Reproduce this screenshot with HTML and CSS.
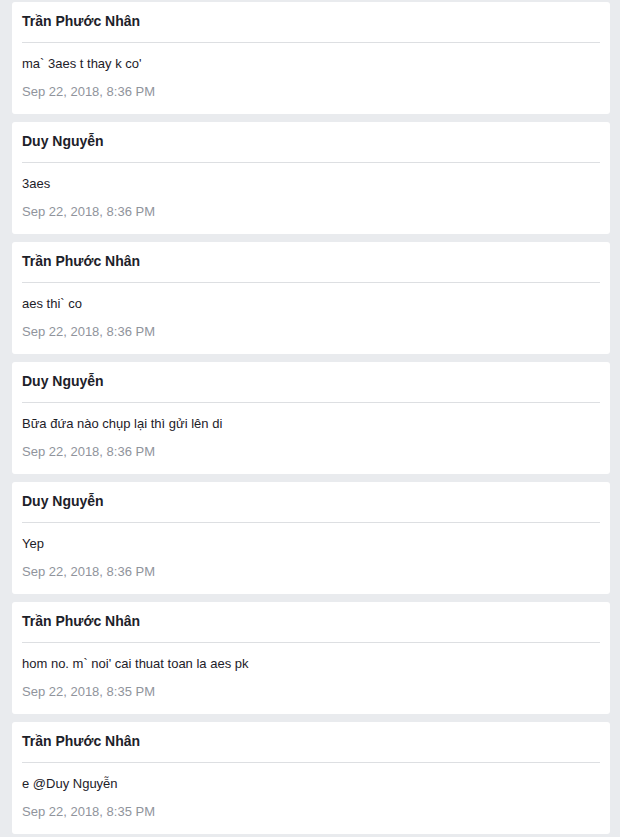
FILE: index.html
```html
<!DOCTYPE html>
<html lang="vi">
<head>
<meta charset="utf-8">
<title>Messages</title>
<link rel="stylesheet" href="styles.css">
</head>
<body>
<div class="list">
  <div class="card">
    <div class="name">Trần Phước Nhân</div>
    <div class="msg">ma` 3aes t thay k co'</div>
    <div class="date">Sep 22, 2018, 8:36 PM</div>
  </div>
  <div class="card">
    <div class="name">Duy Nguyễn</div>
    <div class="msg">3aes</div>
    <div class="date">Sep 22, 2018, 8:36 PM</div>
  </div>
  <div class="card">
    <div class="name">Trần Phước Nhân</div>
    <div class="msg">aes thi` co</div>
    <div class="date">Sep 22, 2018, 8:36 PM</div>
  </div>
  <div class="card">
    <div class="name">Duy Nguyễn</div>
    <div class="msg">Bữa đứa nào chụp lại thì gửi lên di</div>
    <div class="date">Sep 22, 2018, 8:36 PM</div>
  </div>
  <div class="card">
    <div class="name">Duy Nguyễn</div>
    <div class="msg">Yep</div>
    <div class="date">Sep 22, 2018, 8:36 PM</div>
  </div>
  <div class="card">
    <div class="name">Trần Phước Nhân</div>
    <div class="msg">hom no. m` noi' cai thuat toan la aes pk</div>
    <div class="date">Sep 22, 2018, 8:35 PM</div>
  </div>
  <div class="card">
    <div class="name">Trần Phước Nhân</div>
    <div class="msg">e @Duy Nguyễn</div>
    <div class="date">Sep 22, 2018, 8:35 PM</div>
  </div>
</div>
</body>
</html>
```
FILE: styles.css
```css
html, body {
  margin: 0;
  padding: 0;
  background: #e9ebee;
  font-family: "Liberation Sans", Arial, sans-serif;
  color: #1d2129;
}
.list {
  display: flex;
  flex-direction: column;
  gap: 8px;
  padding: 2px 10px 3px 12px;
}
.card {
  background: #fff;
  border-radius: 3px;
  padding: 0 10px 14px 10px;
  height: 112px;
  box-sizing: border-box;
}
.name {
  font-size: 14px;
  font-weight: bold;
  line-height: 18px;
  padding: 10px 0 12px 0;
  border-bottom: 1px solid #dddfe2;
}
.msg {
  font-size: 13px;
  line-height: 16px;
  margin-top: 13px;
}
.date {
  font-size: 13px;
  line-height: 16px;
  margin-top: 12px;
  color: #90949c;
}
```
